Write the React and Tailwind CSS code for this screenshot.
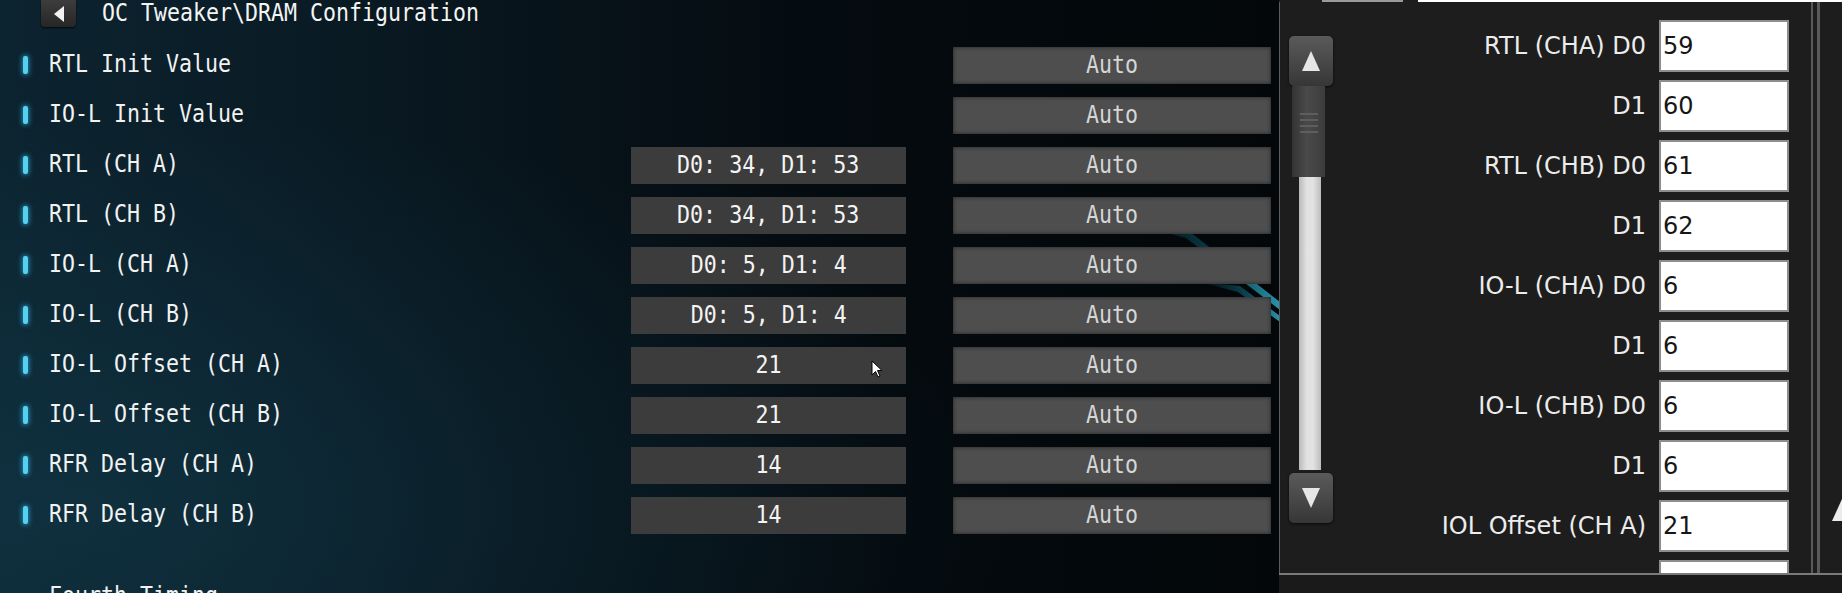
import React from 'react';

const rows = [
  { label: 'RTL Init Value', value: null },
  { label: 'IO-L Init Value', value: null },
  { label: 'RTL (CH A)', value: 'D0: 34, D1: 53' },
  { label: 'RTL (CH B)', value: 'D0: 34, D1: 53' },
  { label: 'IO-L (CH A)', value: 'D0: 5, D1: 4' },
  { label: 'IO-L (CH B)', value: 'D0: 5, D1: 4' },
  { label: 'IO-L Offset (CH A)', value: '21' },
  { label: 'IO-L Offset (CH B)', value: '21' },
  { label: 'RFR Delay (CH A)', value: '14' },
  { label: 'RFR Delay (CH B)', value: '14' },
];

const fields = [
  ['RTL (CHA) D0', '59'],
  ['D1', '60'],
  ['RTL (CHB) D0', '61'],
  ['D1', '62'],
  ['IO-L (CHA) D0', '6'],
  ['D1', '6'],
  ['IO-L (CHB) D0', '6'],
  ['D1', '6'],
  ['IOL Offset (CH A)', '21'],
  ['IOL Offset (CH B)', '21'],
];

const BiosText = ({ children, className = '' }) => (
  <span className={`inline-block scale-x-[0.9] whitespace-nowrap text-[24px] leading-[24px] ${className}`}>
    {children}
  </span>
);

const ScrollButton = ({ down }) => (
  <div className="flex h-[50px] w-[44px] items-center justify-center rounded-[5px] bg-[linear-gradient(180deg,#5a5a5a_0%,#474747_55%,#363636_100%)] shadow-[0_1px_3px_rgba(0,0,0,0.7)]">
    <svg width="20" height="24" viewBox="0 0 20 24">
      <polygon points={down ? '1,2 19,2 10,22' : '10,2 19,22 1,22'} fill="#e6e6e6" />
    </svg>
  </div>
);

export default function App() {
  return (
    <div className="flex h-[593px] w-[1842px] overflow-hidden bg-[#03070a]">
      {/* BIOS screen */}
      <div className="relative h-full w-[1279px] shrink-0 bg-[radial-gradient(ellipse_at_8%_85%,rgba(22,74,94,0.35),transparent_55%),linear-gradient(90deg,#0c2430_0%,#0a1c26_22%,#071219_45%,#040a0e_70%,#03070a_100%)] font-['DejaVu_Sans_Mono',monospace]">
        <svg className="pointer-events-none absolute inset-0" width="1279" height="593">
          <defs>
            <linearGradient id="streak" x1="0" y1="0" x2="1" y2="0">
              <stop offset="0" stopColor="#1aa6c6" stopOpacity="0" />
              <stop offset="0.6" stopColor="#1fb4d4" stopOpacity="0.35" />
              <stop offset="1" stopColor="#3ad0ee" stopOpacity="0.7" />
            </linearGradient>
          </defs>
          <polygon points="1140,226 1190,232 1280,302 1280,310 1186,238" fill="url(#streak)" />
          <polygon points="1200,282 1240,286 1280,316 1280,322 1238,292" fill="url(#streak)" />
        </svg>

        <div className="relative">
          <div className="flex h-[40px] items-start">
            <div className="ml-[41px] flex h-[27px] w-[35px] items-center justify-center rounded-b-[4px] bg-[linear-gradient(180deg,#3d3d3d,#262626)] shadow-[0_1px_2px_rgba(0,0,0,0.8)]">
              <svg width="14" height="18" viewBox="0 0 14 18">
                <polygon points="12,1 12,17 2,9" fill="#f2f2f2" />
              </svg>
            </div>
            <div className="ml-[26px] pt-[1px]">
              <BiosText className="origin-left text-[#f4f4f4]">OC Tweaker\DRAM Configuration</BiosText>
            </div>
          </div>

          {rows.map((row) => (
            <div key={row.label} className="flex h-[50px] items-center">
              <div className="flex w-[631px] items-center">
                <div className="ml-[23px] h-[18px] w-[5px] rounded-[2px] bg-[#55d0ef] shadow-[0_0_5px_1px_rgba(40,165,215,0.75)]" />
                <div className="ml-[21px]">
                  <BiosText className="origin-left text-[#f2f2f2]">{row.label}</BiosText>
                </div>
              </div>
              {row.value ? (
                <div className="flex h-[37px] w-[275px] items-center justify-center bg-[#3c3c3c]">
                  <BiosText className="text-[#f4f4f4]">{row.value}</BiosText>
                </div>
              ) : (
                <div className="w-[275px]" />
              )}
              <div className="ml-[47px] flex h-[37px] w-[318px] items-center justify-center bg-[#4e4e4e] shadow-[inset_0_0_4px_rgba(0,0,0,0.55)]">
                <BiosText className="text-[#d6d6d6]">Auto</BiosText>
              </div>
            </div>
          ))}

          <div className="mt-[31px] flex h-[50px] items-center pl-[49px]">
            <BiosText className="origin-left text-[#f2f2f2]">Fourth Timing</BiosText>
          </div>
        </div>

        <svg className="pointer-events-none absolute left-[871px] top-[360px]" width="13" height="19" viewBox="0 0 13 19">
          <path d="M1 1 L1 15 L4.5 11.5 L7 17 L9 16 L6.5 10.5 L11 10.5 Z" fill="#ffffff" stroke="#000000" strokeWidth="1" />
        </svg>
      </div>

      {/* Tool window */}
      <div className="flex h-full w-[563px] shrink-0 flex-col bg-[#1d1d1d] font-['DejaVu_Sans',sans-serif]">
        <div className="flex h-[2px] shrink-0">
          <div className="w-[43px]" />
          <div className="w-[81px] bg-[#9a9a9a]" />
          <div className="w-[15px]" />
          <div className="flex-1 bg-white" />
        </div>

        <div className="flex min-h-0 flex-1">
          <div className="w-px bg-[#5c5c5c]" />
          <div className="flex w-[531px] overflow-hidden">
            <div className="ml-[9px] flex w-[44px] shrink-0 flex-col pt-[34px]">
              <ScrollButton />
              <div className="ml-[3px] flex h-[91px] w-[33px] flex-col items-center bg-[linear-gradient(90deg,#333,#4a4a4a_45%,#3c3c3c)] pt-[27px]">
                <div className="flex w-[18px] flex-col gap-[4px]">
                  <div className="h-[2px] bg-[#5e5e5e]" />
                  <div className="h-[2px] bg-[#5e5e5e]" />
                  <div className="h-[2px] bg-[#5e5e5e]" />
                  <div className="h-[2px] bg-[#5e5e5e]" />
                </div>
              </div>
              <div className="ml-[10px] h-[293px] w-[22px] bg-[linear-gradient(90deg,#b9b9b9,#e2e2e2_35%,#e2e2e2_65%,#bcbcbc)]" />
              <div className="mt-[3px]">
                <ScrollButton down />
              </div>
            </div>

            <div className="flex flex-1 flex-col gap-[8px] pr-[22px] pt-[18px]">
              {fields.map(([label, value], i) => (
                <div key={i} className="flex h-[52px] shrink-0 items-center justify-end gap-[13px]">
                  <span className="whitespace-nowrap text-[24px] leading-[28px] text-[#ececec]">{label}</span>
                  <div className="flex h-[52px] w-[130px] shrink-0 items-center border-2 border-[#8d8d8d] bg-white pl-[2px] text-[24px] leading-[28px] text-[#161616]">
                    {value}
                  </div>
                </div>
              ))}
            </div>
          </div>
          <div className="w-[2px] bg-[#595959]" />
          <div className="w-[4px]" />
          <div className="w-[3px] bg-[#595959]" />
          <div className="relative flex-1">
            <svg className="absolute left-[12px] top-[497px]" width="10" height="22" viewBox="0 0 10 22">
              <polygon points="10,0 20,22 0,22" fill="#ececec" />
            </svg>
          </div>
        </div>

        <div className="h-[2px] shrink-0 bg-[#7a7a7a]" />
        <div className="h-[18px] shrink-0 bg-[#1a1a1a]" />
      </div>
    </div>
  );
}
